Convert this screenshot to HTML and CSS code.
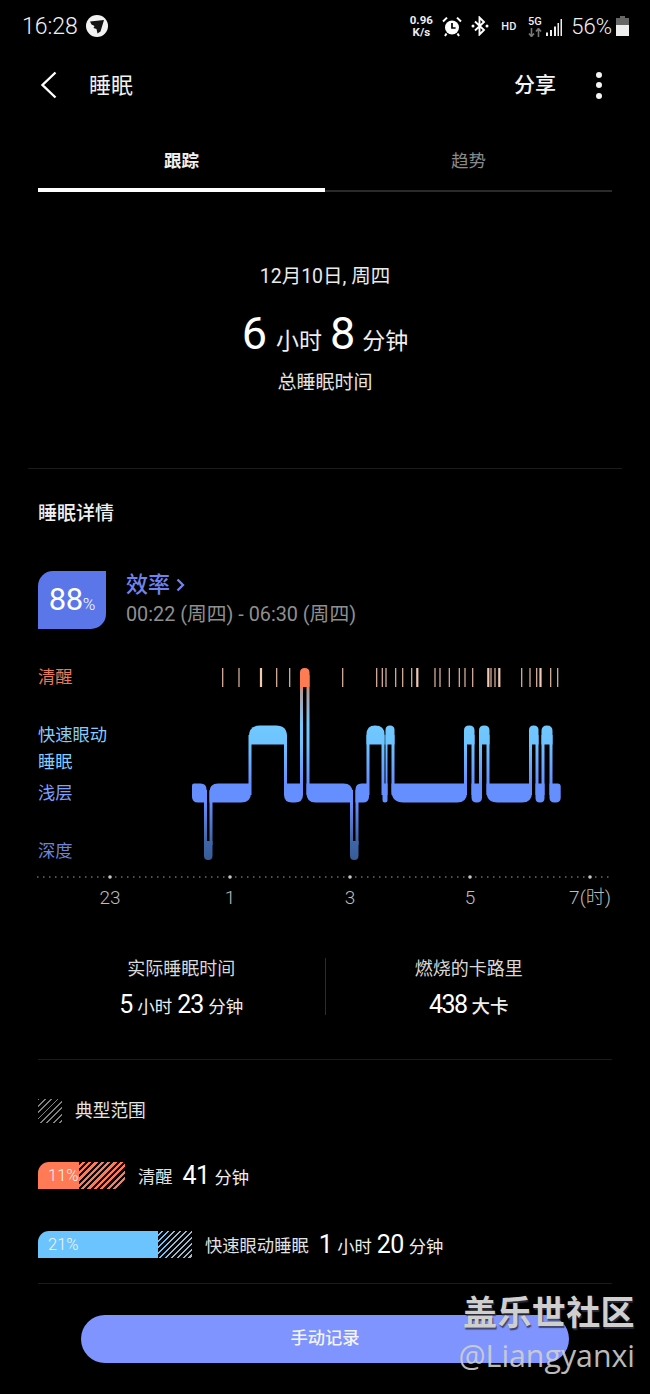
FILE: index.html
```html
<!DOCTYPE html>
<html lang="zh">
<head>
<meta charset="utf-8">
<title>睡眠</title>
<link rel="stylesheet" href="styles.css">
</head>
<body>
<div class="screen">
  <header class="status">
    <div class="status-left">
      <span class="clock">16:28</span>
      <svg class="bird" viewBox="0 0 22 22"><circle cx="11" cy="11" r="11" fill="#f2f2f2"/><path d="M4 6.500 18 5 14.500 16.500 11.500 18.500 10.500 14 7.500 13 8.500 11 5.500 9.500Z" fill="#111"/></svg>
    </div>
    <div class="status-right">
      <div class="speed"><span>0.96</span><span>K/s</span></div>
      <svg class="ic-alarm" viewBox="0 0 20 21"><circle cx="10" cy="11.500" r="7" fill="#fff"/><path d="M10 7v5h3.600" stroke="#000" stroke-width="1.700" fill="none"/><path d="M1 5.500 5 1.600M19 5.500 15 1.600M4.500 17.500 3 20M15.500 17.500 17 20" stroke="#fff" stroke-width="2" fill="none"/></svg>
      <svg class="ic-bt" viewBox="0 0 18 20"><path d="M4 5.500 13 14 8.500 18.500V1.500L13 6 4 14.500" stroke="#fff" stroke-width="1.900" fill="none"/><circle cx="2" cy="10" r="1.500" fill="#fff"/><circle cx="16" cy="10" r="1.500" fill="#fff"/></svg>
      <span class="hd">HD</span>
      <div class="net">
        <span>5G</span>
        <svg class="ic-arrows" viewBox="0 0 14 9"><path d="M3.500 0v8M1 5.500 3.500 8.500 6 5.500M10.500 9V1M8 3.500 10.500.5 13 3.500" stroke="#777" stroke-width="1.600" fill="none"/></svg>
      </div>
      <svg class="ic-signal" viewBox="0 0 17 17"><path d="M1 13.500h2V17H1zM5 11h2v6H5zM9 7.500h2V17H9zM12.500 4h1.500v13h-1.500zM15.500 0H17v17h-1.500z" fill="#eee"/></svg>
      <span class="pct">56%</span>
      <svg class="ic-batt" viewBox="0 0 13 20"><path d="M4 0h5v2h4v8H0V2h4z" fill="#666"/><path d="M0 9h13v11H0z" fill="#eee"/></svg>
    </div>
  </header>

  <nav class="appbar">
    <svg class="back" viewBox="0 0 18 28"><path d="M15.500 1.500 2.500 14l13 12.500" stroke="#fff" stroke-width="2.400" fill="none"/></svg>
    <h1 class="title">睡眠</h1>
    <span class="share">分享</span>
    <div class="kebab"><i></i><i></i><i></i></div>
  </nav>

  <div class="tabs">
    <div class="tab tab-on">跟踪</div>
    <div class="tab">趋势</div>
  </div>

  <section class="summary">
    <div class="date">12月10日, 周四</div>
    <div class="total"><b>6</b><span>小时</span><b>8</b><span>分钟</span></div>
    <div class="total-label">总睡眠时间</div>
  </section>

  <section class="details">
    <h2 class="details-title">睡眠详情</h2>
    <div class="eff">
      <div class="badge"><b>88</b><span>%</span></div>
      <div class="eff-text">
        <div class="eff-link">效率<svg viewBox="0 0 9 14"><path d="M1.500 1.500 7 7l-5.500 5.500" stroke="#7184f0" stroke-width="2.300" fill="none"/></svg></div>
        <div class="eff-time">00:22 (周四) - 06:30 (周四)</div>
      </div>
    </div>

    <div class="chart">
      <div class="levels">
        <span class="lv-awake">清醒</span>
        <span class="lv-rem">快速眼动</span>
        <span class="lv-rem">睡眠</span>
        <span class="lv-light">浅层</span>
        <span class="lv-deep">深度</span>
      </div>
      <svg class="hypno" viewBox="0 660 650 250" width="650" height="250">
        <defs>
          <linearGradient id="sleep" gradientUnits="userSpaceOnUse" x1="0" y1="668" x2="0" y2="860">
            <stop offset="0" stop-color="#ff7d55"/>
            <stop offset=".099" stop-color="#ff7a50"/>
            <stop offset=".115" stop-color="#b59a98"/>
            <stop offset=".297" stop-color="#72c9ff"/>
            <stop offset=".396" stop-color="#6cc3ff"/>
            <stop offset=".6" stop-color="#658fff"/>
            <stop offset=".698" stop-color="#658fff"/>
            <stop offset=".9" stop-color="#3e66a8"/>
            <stop offset="1" stop-color="#385c98"/>
          </linearGradient>
        </defs>
        <g class="ticks">
          <path d="M222.700 668v19M239 668v19M276.700 668v19M289.700 668v19M342.700 668v19M376.700 668v19M382.300 668v19M386 668v19M395.700 668v19M402.700 668v19M411.700 668v19M435 668v19M440 668v19M449.300 668v19M459.300 668v19M465 668v19M472.700 668v19M491 668v19M495 668v19M521.700 668v19M530 668v19M536.700 668v19M550.700 668v19M557.700 668v19"/>
          <path class="thick" d="M261 668v19M417.300 668v19M488.300 668v19M499.300 668v19M540.500 668v19"/>
        </g>
        <g fill="url(#sleep)">
          <path d="M204 790h3v55h-3zM209.500 790h3v55h-3zM248.500 735h3v60h-3zM284 735h3v60h-3zM300 675h3v120h-3zM306.500 675h3v120h-3zM350 790h3v55h-3zM355.500 790h3v55h-3zM366.500 735h3v60h-3zM381.500 735h3v60h-3zM385.500 735h2v60h-2zM391.500 735h3v60h-3zM464 735h3v60h-3zM471.500 735h3v60h-3zM479 735h3v60h-3zM486.500 735h3v60h-3zM529 735h3v60h-3zM535.500 735h3v60h-3zM541.500 735h3v60h-3zM549.500 735h3v60h-3z"/>
          <path d="M194 783.500h6.500q6 0 6 6V802.500H198q-6 0-6-6v-11q0-2 2-2z"/>
          <path d="M218 783.500h33V793q0 9.500-10 9.500H209.500V792q0-8.500 8.500-8.500z"/>
          <path d="M260 725.500h16q11 0 11 11v8H249v-8q0-11 11-11z"/>
          <path d="M284 783.500h19v11q0 8-8 8h-3q-8 0-8-8z"/>
          <path d="M300 672.500q0-4.500 4.750-4.500t4.750 4.500V687H300z"/>
          <path d="M306.500 783.500h37q9 0 9 9v10H315.500q-9 0-9-9z"/>
          <path d="M204 841h8.500v14.750q0 4.250-4.250 4.250T204 855.750z"/>
          <path d="M350 841h8.500v14.750q0 4.250-4.250 4.250T350 855.750z"/>
          <path d="M361.500 783.500h7.500v13q0 6-6 6h-7.500v-13q0-6 6-6z"/>
          <path d="M375 725.500q9.500 0 9.500 9v10h-18v-10q0-9 8.500-9z"/>
          <path d="M382.500 783.500h5v16.500q0 2.500-2.500 2.500t-2.500-2.500z"/>
          <path d="M385.500 730q0-4.500 4.500-4.500t4.500 4.500v14.500h-9z"/>
          <path d="M391.500 783.500H467v9q0 10-10 10h-53.500q-12 0-12-12z"/>
          <path d="M464 730.500q0-5 5.250-5t5.250 5v14H464z"/>
          <path d="M471.500 783.500H482v14q0 5-5.250 5t-5.250-5z"/>
          <path d="M479 730.500q0-5 5.250-5t5.250 5v14H479z"/>
          <path d="M486.500 783.500H532v9q0 10-10 10h-24.500q-11 0-11-11z"/>
          <path d="M529 730q0-4.500 4.750-4.500t4.750 4.500v14.500H529z"/>
          <path d="M535.500 783.500h9v14.500q0 4.500-4.500 4.500t-4.500-4.500z"/>
          <path d="M541.500 731q0-5.500 5.500-5.500t5.500 5.500v13.500h-11z"/>
          <path d="M549.500 783.500h8.200q3 0 3 3V797.500q0 5-5 5h-1.200q-5 0-5-5z"/>
        </g>
        <line class="axis" x1="37" y1="877" x2="612" y2="877"/>
        <g class="axis-dots">
          <circle cx="110" cy="877" r="1.800"/><circle cx="230" cy="877" r="1.800"/><circle cx="350" cy="877" r="1.800"/><circle cx="470" cy="877" r="1.800"/><circle cx="590" cy="877" r="1.800"/>
        </g>
        <g class="axis-text">
          <text x="110" y="904">23</text><text x="230" y="904">1</text><text x="350" y="904">3</text><text x="470" y="904">5</text><text x="590" y="904">7(时)</text>
        </g>
      </svg>
    </div>

    <div class="stats">
      <div class="stat">
        <div class="stat-label">实际睡眠时间</div>
        <div class="stat-value"><b>5</b><span>小时</span><b>23</b><span>分钟</span></div>
      </div>
      <div class="stat stat-sep">
        <div class="stat-label">燃烧的卡路里</div>
        <div class="stat-value"><b class="kcal-num">438</b><span class="kcal">大卡</span></div>
      </div>
    </div>
  </section>

  <section class="ranges">
    <div class="legend"><i class="legend-swatch"></i><span>典型范围</span></div>
    <div class="range range-awake">
      <div class="bar bar-awake"><span class="bar-fill">11%</span><span class="bar-hatch"></span></div>
      <span class="range-name">清醒</span>
      <span class="range-val"><b>41</b><span>分钟</span></span>
    </div>
    <div class="range range-rem">
      <div class="bar bar-rem"><span class="bar-fill">21%</span><span class="bar-hatch"></span></div>
      <span class="range-name">快速眼动睡眠</span>
      <span class="range-val"><b>1</b><span>小时</span><b>20</b><span>分钟</span></span>
    </div>
  </section>

  <button class="record">手动记录</button>
  <div class="watermark"><div class="wm-cn">盖乐世社区</div><div class="wm-en">@Liangyanxi</div></div>
</div>
</body>
</html>
```

FILE: styles.css
```css
* { box-sizing: border-box; margin: 0; padding: 0; }
html, body { background: #000; }
body {
  width: 650px;
  height: 1394px;
  overflow: hidden;
  color: #fff;
  font-family: Roboto, "Noto Sans CJK SC", sans-serif;
}
.screen { position: relative; width: 650px; height: 1394px; overflow: hidden; background: #000; }

/* status bar */
.status { height: 52px; display: flex; justify-content: space-between; align-items: center; padding: 0 21px 0 22px; }
.status-left { display: flex; align-items: center; gap: 8px; }
.clock { font-size: 23px; font-weight: 300; color: #f0f0f0; }
.bird { width: 22px; height: 22px; }
.status-right { display: flex; align-items: center; }
.speed { display: flex; flex-direction: column; align-items: center; width: 26px; font-size: 11.500px; font-weight: 700; line-height: 12px; color: #eee; }
.ic-alarm { width: 20px; height: 21px; margin-left: 8px; }
.ic-bt { width: 18px; height: 20px; margin-left: 9px; }
.hd { font-size: 11px; font-weight: 500; margin-left: 12px; color: #eee; width: 17px; }
.net { display: flex; flex-direction: column; align-items: center; margin-left: 9px; width: 15px; font-size: 11px; font-weight: 500; line-height: 11px; color: #eee; }
.ic-arrows { width: 14px; height: 9px; margin-top: 1px; }
.ic-signal { width: 17px; height: 17px; margin-left: 3px; margin-top: 2px; }
.pct { font-size: 22px; font-weight: 300; margin-left: 9px; color: #f0f0f0; }
.ic-batt { width: 13px; height: 20px; margin-left: 4px; }

/* app bar */
.appbar { height: 66px; display: flex; align-items: center; padding: 0 48px 0 40px; }
.back { width: 18px; height: 28px; }
.title { font-size: 22px; font-weight: 400; margin: 0 0 4px 31px; flex: 1; color: #f2f2f2; }
.share { font-size: 21px; font-weight: 500; color: #f6f6f6; margin-bottom: 4px; }
.kebab { display: flex; flex-direction: column; gap: 4.500px; margin-left: 40px; }
.kebab i { width: 6px; height: 6px; border-radius: 50%; background: #f4f4f4; }

/* tabs */
.tabs { height: 74px; margin: 0 38px; display: flex; }
.tab { flex: 1; padding-top: 31px; text-align: center; font-size: 17.500px; line-height: 24px; color: #8a8a8a; border-bottom: 2px solid #2a2a2a; }
.tab-on { color: #f2f2f2; font-weight: 700; border-bottom: 4px solid #fff; }

/* summary */
.summary { height: 277px; margin: 0 28px; padding-top: 72px; border-bottom: 1px solid #1c1c1c; text-align: center; }
.date { font-size: 19.500px; line-height: 26px; color: #eaeaea; }
.total { display: flex; justify-content: center; align-items: baseline; margin-top: 15px; height: 58px; line-height: 58px; }
.total b { font-size: 45px; font-weight: 400; }
.total span { font-size: 23px; margin: 0 8px 0 9px; color: #eee; }
.total span:last-child { margin-right: 0; margin-left: 7px; }
.total-label { font-size: 19px; line-height: 26px; margin-top: 7px; color: #e4e4e4; }

/* details */
.details { margin: 0 38px; height: 591px; border-bottom: 1px solid #1c1c1c; }
.details-title { font-size: 19px; font-weight: 500; line-height: 28px; padding-top: 31px; box-sizing: content-box; height: 28px; color: #f0f0f0; }
.eff { display: flex; align-items: center; margin-top: 43px; height: 58px; }
.badge { width: 68px; height: 58px; background: #5b76e8; border-radius: 15px 0 15px 0; display: flex; align-items: baseline; justify-content: center; line-height: 58px; }
.badge b { font-size: 31px; font-weight: 400; letter-spacing: -.5px; }
.badge span { font-size: 17px; font-weight: 300; }
.eff-text { margin-left: 20px; }
.eff-link { font-size: 22px; font-weight: 500; line-height: 28px; color: #6f83ee; display: flex; align-items: center; height: 28px; }
.eff-link svg { width: 9px; height: 14px; margin-left: 6px; }
.eff-time { font-size: 19.800px; line-height: 30px; margin-top: 1px; color: #8f8f8f; }

.chart { position: relative; height: 250px; margin: 31px -38px 0; }
.hypno { display: block; }
.levels { position: absolute; left: 38px; top: 4px; display: grid; grid-template-rows: 58px 27px 31px 58px 26px; font-size: 17.300px; line-height: 26px; }
.lv-awake { color: #e8795a; }
.lv-rem { color: #86ccff; }
.lv-light { color: #7f9fff; }
.lv-deep { color: #6d84dc; }
.ticks path { stroke: #e6b8a4; stroke-width: 1.200; fill: none; }
.ticks .thick { stroke: #f2c8b4; stroke-width: 2.200; }
.axis { stroke: #6a6a6a; stroke-width: 1.500; stroke-dasharray: 1.500 4.500; }
.axis-dots circle { fill: #c8c8c8; }
.axis-text text { font-size: 19px; fill: #bdbdbd; text-anchor: middle; font-family: Roboto, "Noto Sans CJK SC", sans-serif; font-weight: 300; }

.stats { display: flex; margin-top: 48px; height: 57px; }
.stat { flex: 1; text-align: center; }
.stat-sep { border-left: 1px solid #2c2c2c; }
.stat-label { font-size: 18px; line-height: 22px; color: #d8d8d8; }
.stat-value { display: flex; justify-content: center; align-items: baseline; gap: 5px; line-height: 30px; margin-top: 10px; }
.stat-value b { font-size: 25px; font-weight: 400; letter-spacing: -1px; }
.stat-value span { font-size: 17.500px; color: #eee; }
.stat-value .kcal-num { letter-spacing: -1.500px; }
.stat-value .kcal { font-size: 18.500px; font-weight: 500; }

/* ranges */
.ranges { margin: 0 38px; height: 224px; border-bottom: 1px solid #1c1c1c; }
.legend { display: flex; align-items: center; gap: 13px; padding-top: 39px; font-size: 17.700px; line-height: 24px; color: #e4e4e4; }
.legend-swatch { width: 24px; height: 24px; background: repeating-linear-gradient(135deg, #808080 0 1.300px, #000 1.300px 4.500px); }
.range { display: flex; align-items: center; height: 27px; }
.range-awake { margin-top: 39px; }
.range-rem { margin-top: 42px; }
.bar { height: 27px; display: flex; overflow: hidden; border-radius: 11px 0 11px 0; }
.bar-fill { font-size: 16.500px; font-weight: 300; line-height: 27px; padding-left: 10px; color: #f4f4f4; }
.bar-awake .bar-fill { width: 41px; background: #ff7a55; }
.bar-awake .bar-hatch { width: 46px; background: repeating-linear-gradient(135deg, #0b0b0b 0 2.200px, #ff7a55 2.200px 4.500px); }
.bar-rem { border-bottom-right-radius: 0; }
.bar-rem .bar-fill { width: 120px; background: #6cc4ff; }
.bar-rem .bar-hatch { width: 34px; background: repeating-linear-gradient(135deg, #050505 0 2.500px, transparent 2.500px 4.200px), linear-gradient(90deg, #6cc4ff 9px, #9fb8cc 9px); }
.range-name { font-size: 17.300px; color: #e2e2e2; margin-left: 13px; }
.range-val { display: flex; align-items: baseline; gap: 5px; margin-left: 10px; }
.range-val b { font-size: 25px; font-weight: 400; letter-spacing: -.6px; }
.range-val span { font-size: 17.300px; color: #eee; }

/* floating action */
.record { position: absolute; left: 81px; top: 1315px; width: 488px; height: 48px; padding-bottom: 5px; border: 0; border-radius: 24px; background: #7f94ff; color: #f4f4f4; font: 500 17.300px "Noto Sans CJK SC", sans-serif; }
.watermark { position: absolute; right: 15px; top: 1288px; text-align: right; color: #cfcfcf; }
.wm-cn { font: 700 34px/46px "Noto Sans CJK SC", sans-serif; letter-spacing: .4px; text-shadow: 1px 2px 1px rgba(50, 50, 70, .8); }
.wm-en { font: 400 30.300px/36px "Open Sans", sans-serif; margin-top: 4px; opacity: .9; }
```
